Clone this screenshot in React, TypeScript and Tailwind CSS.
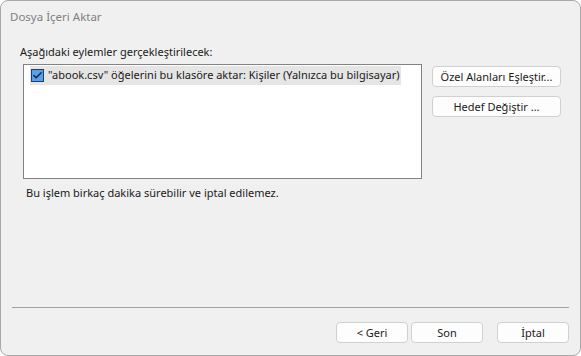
import { Check } from "lucide-react";

const font = { fontFamily: '"Noto Sans", "Open Sans", Arial, sans-serif' };

function Btn({ label, className }: { label: string; className: string }) {
  return (
    <button
      className={`h-[21px] flex items-center justify-center bg-[#fdfdfd] border border-[#d0d0d0] rounded-[4px] text-[11px] text-[#1a1a1a] leading-none ${className}`}
    >
      {label}
    </button>
  );
}

export default function App() {
  return (
    <div
      style={font}
      className="w-[581px] h-[356px] bg-[#f0f0f0] border border-[#a8a8a8] rounded-[8px] flex flex-col overflow-hidden text-[11px] text-[#1a1a1a]"
    >
      {/* başlık */}
      <div className="h-[31px] pl-[9px] flex items-center text-[11.5px] text-[#808080]">
        Dosya İçeri Aktar
      </div>

      <div className="pl-[19px] pt-[12px]">
        <div className="h-[16px] leading-[16px]">Aşağıdaki eylemler gerçekleştirilecek:</div>

        <div className="flex mt-[4px]">
          {/* liste */}
          <div className="ml-[3px] w-[399px] h-[115px] bg-white border border-[#828282] pt-[1px] pl-[6px]">
            <div className="w-[371px] h-[19px] bg-[#e5e5e5] flex items-center pl-[1px]">
              <div className="w-[13px] h-[13px] bg-[#5aa0e6] border border-[#1b3f73] flex items-center justify-center">
                <Check className="w-[11px] h-[11px] text-[#0b2447]" strokeWidth={3} />
              </div>
              <span className="ml-[4px] whitespace-nowrap">
                "abook.csv" öğelerini bu klasöre aktar: Kişiler (Yalnızca bu bilgisayar)
              </span>
            </div>
          </div>

          <div className="ml-[10px] mt-[2px] flex flex-col gap-[9px]">
            <Btn label="Özel Alanları Eşleştir..." className="w-[129px]" />
            <Btn label="Hedef Değiştir ..." className="w-[129px]" />
          </div>
        </div>

        <div className="mt-[6px] ml-[6px] h-[16px] leading-[16px]">
          Bu işlem birkaç dakika sürebilir ve iptal edilemez.
        </div>
      </div>

      <div className="flex-1" />

      <div className="mx-[11px] h-px bg-[#a0a0a0]" />

      <div className="flex justify-end pr-[11px] pt-[14px] pb-[12px]">
        <Btn label="< Geri" className="w-[72px]" />
        <Btn label="Son" className="w-[72px] ml-[3px]" />
        <Btn label="İptal" className="w-[72px] ml-[14px]" />
      </div>
    </div>
  );
}
